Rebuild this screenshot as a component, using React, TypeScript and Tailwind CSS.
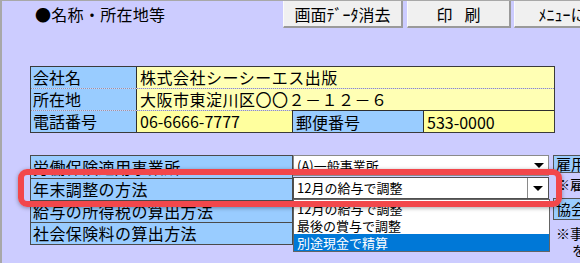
const jp = "font-['Noto_Sans_CJK_JP','Noto_Sans',sans-serif]";

function Arrow() {
  return <span className="block w-0 h-0 border-x-[5px] border-t-[5px] border-x-transparent border-t-black" />;
}

const labels2 = ['労働保険適用事業所', '年末調整の方法', '給与の所得税の算出方法', '社会保険料の算出方法'];
const options = ['12月の給与で調整', '最後の賞与で調整', '別途現金で精算'];

export default function App() {
  return (
    <div className={`relative w-[580px] h-[263px] overflow-hidden bg-[#CCCCFF] border-l-2 border-t border-[#A8A8A8] text-black ${jp}`}>
      {/* header */}
      <div className="flex h-[27px]">
        <div className="w-[281px] shrink-0 pl-[33px] pt-[3px] text-[16px] leading-[20px] tracking-[0.3px]">●名称・所在地等</div>
        <div className="w-[120px] shrink-0 h-[27px] bg-[#F0F0F0] border-l border-[#FAFAFA] border-r-2 border-b-2 border-r-[#9A9A9A] border-b-[#9A9A9A] flex items-center justify-center text-[16px]">
          画面ﾃﾞｰﾀ消去
        </div>
        <div className="ml-[4px] w-[104px] shrink-0 h-[27px] bg-[#F0F0F0] border-l border-[#FAFAFA] border-r-2 border-b-2 border-r-[#9A9A9A] border-b-[#9A9A9A] flex items-center justify-center text-[16px]">
          印<span className="inline-block w-[12px]" />刷
        </div>
        <div className="ml-[3px] w-[130px] shrink-0 h-[27px] bg-[#F0F0F0] border-l border-[#FAFAFA] border-r-2 border-b-2 border-r-[#9A9A9A] border-b-[#9A9A9A] flex items-center justify-center text-[16px]">
          ﾒﾆｭｰに戻る
        </div>
      </div>

      {/* company table */}
      <div className="ml-[28px] mt-[38px] w-[525px] border border-[#3A3A3A] text-[16px] leading-[21px]">
        <div className="flex h-[22px] border-b border-dotted border-[#9A9A9A]">
          <div className="w-[106px] shrink-0 border-r border-[#2E2E2E] bg-[#99CCFF] pl-[2px]">会社名</div>
          <div className="flex-1 bg-[#FFFFB4] pl-[3px] tracking-[0.5px]">株式会社シーシーエス出版</div>
        </div>
        <div className="flex h-[22px] border-b border-dotted border-[#9A9A9A]">
          <div className="w-[106px] shrink-0 border-r border-[#2E2E2E] bg-[#99CCFF] pl-[2px]">所在地</div>
          <div className="flex-1 bg-[#FFFFB4] pl-[3px] tracking-[0.5px]">大阪市東淀川区〇〇２－１２－６</div>
        </div>
        <div className="flex h-[21px]">
          <div className="w-[106px] shrink-0 border-r border-[#2E2E2E] bg-[#99CCFF] pl-[2px]">電話番号</div>
          <div className="w-[155px] shrink-0 bg-[#FFFF9E] pl-[3px]">06-6666-7777</div>
          <div className="w-[132px] shrink-0 -mt-px h-[22px] border-t border-x border-[#2E2E2E] bg-[#99CCFF] pl-[3px] leading-[22px]">郵便番号</div>
          <div className="flex-1 -mt-px h-[22px] border-t border-[#2E2E2E] bg-[#FFFF9E] pl-[3px] leading-[22px]">533-0000</div>
        </div>
      </div>

      {/* settings table */}
      <div className="flex items-start mt-[22px] ml-[28px]">
        <div className="w-[263px] shrink-0 border border-[#4A4A4A] bg-[#99CCFF] text-[16px]">
          {labels2.map((l, i) => (
            <div
              key={l}
              className={`pl-[2px] tracking-[0.4px] ${i === 0 ? 'h-[23px] leading-[22px]' : i === 3 ? 'h-[21px] leading-[21px]' : 'h-[22px] leading-[21px]'} ${i < 3 ? 'border-b border-[#4A4A4A]' : ''}`}
            >
              {l}
            </div>
          ))}
        </div>

        <div className="w-[256px] shrink-0 text-[13px]">
          <div className="flex h-[21px] border border-[#8A8A8A] bg-white">
            <div className="flex-1 pl-[3px] leading-[19px]">(A)一般事業所</div>
            <div className="w-[18px] flex items-center justify-center">
              <Arrow />
            </div>
          </div>
          <div className="relative mt-[1px]">
            <div className="flex h-[22px] border border-[#505050] bg-white">
              <div className="flex-1 pl-[3px] leading-[20px]">12月の給与で調整</div>
              <div className="w-[21px] border-l border-[#8A8A8A] flex items-center justify-center">
                <Arrow />
              </div>
            </div>
            <div className="absolute left-0 top-full z-10 w-[257px] border border-[#646464] bg-white">
              {options.map((o, i) => (
                <div
                  key={o}
                  className={`h-[17px] leading-[17px] pl-[3px] ${i === 2 ? 'bg-[#0078D7] text-white' : ''}`}
                >
                  {o}
                </div>
              ))}
            </div>
          </div>
        </div>

        <div className="ml-[4px] w-[200px] shrink-0">
          <div className="h-[18px] border border-[#555] bg-[#99CCFF] pl-[2px] text-[15px] leading-[16px]">雇用保険料率</div>
          <div className="mt-[3px] pl-[3px] text-[14px] leading-[17px]">※雇用保険の事業の種類</div>
          <div className="mt-[5px] h-[22px] border border-[#555] bg-[#99CCFF] pl-[2px] text-[15px] leading-[20px]">協会けんぽ</div>
          <div className="mt-[5px] pl-[3px] text-[14px] leading-[17px]">※事業所の所在地の都道府県</div>
          <div className="pl-[19px] text-[14px] leading-[17px]">を選択してください</div>
        </div>
      </div>

      {/* annotation */}
      <div className="absolute left-[16px] top-[168px] z-20 w-[544px] h-[38px] rounded-[9px] border-[6px] border-[#F2474B] shadow-[0_1px_4px_rgba(0,0,0,0.35)]" />
    </div>
  );
}
